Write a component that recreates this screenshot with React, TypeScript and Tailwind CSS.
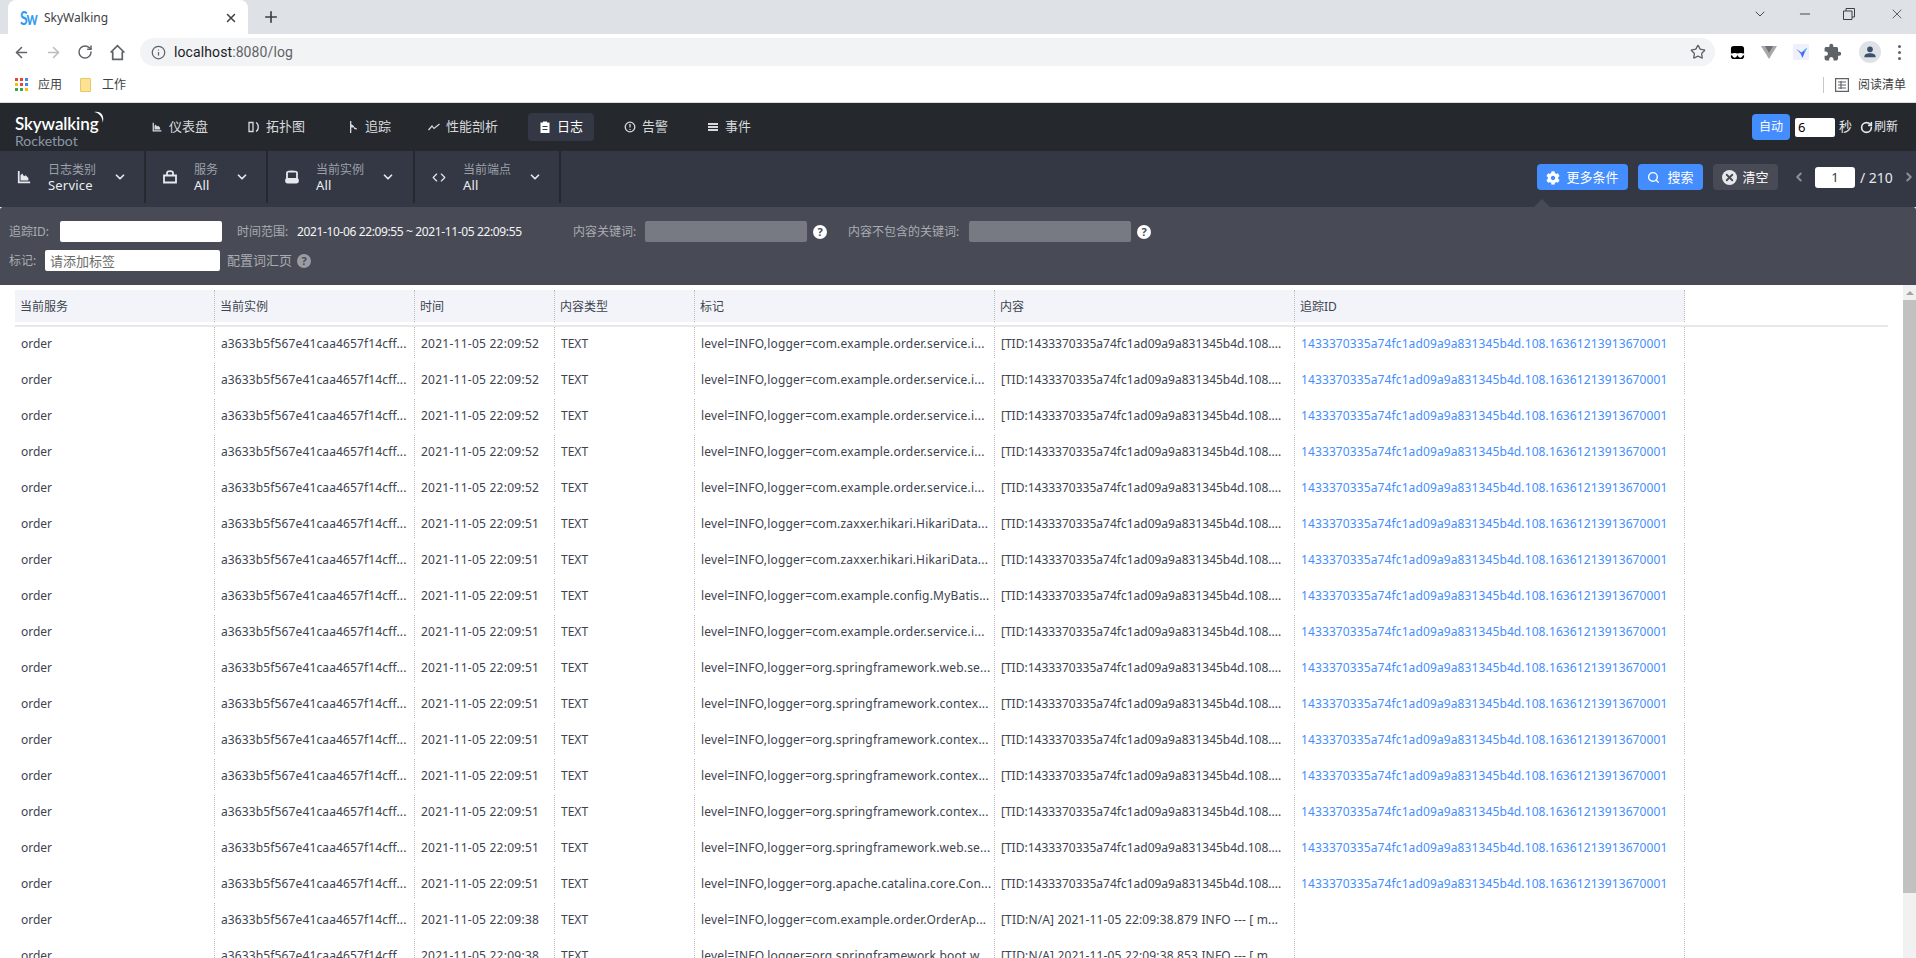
import { ArrowLeft, ArrowRight, RotateCw, Info, Star, X, Plus, ChevronDown, ChevronLeft, ChevronRight, Minus, Search, Code } from 'lucide-react';
import { FaCog } from 'react-icons/fa';
import { MdExtension } from 'react-icons/md';

const ui = 'font-["Noto_Sans","Noto_Sans_CJK_SC",sans-serif]';

const traceId = '1433370335a74fc1ad09a9a831345b4d.108.16361213913670001';
const tidText = '[TID:1433370335a74fc1ad09a9a831345b4d.108....';
const svc = 'level=INFO,logger=com.example.order.service.i...';
const hikari = 'level=INFO,logger=com.zaxxer.hikari.HikariData...';
const web = 'level=INFO,logger=org.springframework.web.se...';
const ctx = 'level=INFO,logger=org.springframework.contex...';

const rows = [
  { time: '22:09:52', tag: svc, content: tidText, trace: traceId },
  { time: '22:09:52', tag: svc, content: tidText, trace: traceId },
  { time: '22:09:52', tag: svc, content: tidText, trace: traceId },
  { time: '22:09:52', tag: svc, content: tidText, trace: traceId },
  { time: '22:09:52', tag: svc, content: tidText, trace: traceId },
  { time: '22:09:51', tag: hikari, content: tidText, trace: traceId },
  { time: '22:09:51', tag: hikari, content: tidText, trace: traceId },
  { time: '22:09:51', tag: 'level=INFO,logger=com.example.config.MyBatis...', content: tidText, trace: traceId },
  { time: '22:09:51', tag: svc, content: tidText, trace: traceId },
  { time: '22:09:51', tag: web, content: tidText, trace: traceId },
  { time: '22:09:51', tag: ctx, content: tidText, trace: traceId },
  { time: '22:09:51', tag: ctx, content: tidText, trace: traceId },
  { time: '22:09:51', tag: ctx, content: tidText, trace: traceId },
  { time: '22:09:51', tag: ctx, content: tidText, trace: traceId },
  { time: '22:09:51', tag: web, content: tidText, trace: traceId },
  { time: '22:09:51', tag: 'level=INFO,logger=org.apache.catalina.core.Con...', content: tidText, trace: traceId },
  { time: '22:09:38', tag: 'level=INFO,logger=com.example.order.OrderAp...', content: '[TID:N/A] 2021-11-05 22:09:38.879 INFO --- [ m...', trace: '' },
  { time: '22:09:38', tag: 'level=INFO,logger=org.springframework.boot.w...', content: '[TID:N/A] 2021-11-05 22:09:38.853 INFO --- [ m...', trace: '' },
];

const ChartIcon = ({ className }: { className?: string }) => (
  <svg viewBox="0 0 16 16" className={className} fill="currentColor">
    <path d="M1 1h2v12h12v2H1z" />
    <path d="M4 6l2-2 2 3 2-1 3 3v3H4z" />
  </svg>
);

const QuestionDot = ({ color }: { color: string }) => (
  <span className={`flex h-[14px] w-[14px] items-center justify-center rounded-full ${color} text-[11px] font-bold leading-none text-[#484b55]`}>?</span>
);

const Selector = ({ w, icon, label, value, gap }: { w: string; icon: React.ReactNode; label: string; value: string; gap: string }) => (
  <div className={`flex h-[52px] ${w} items-center border-r-2 border-[#25292e] pl-[17px]`}>
    <span className="flex w-[14px] justify-center text-[#e6e8ec]">{icon}</span>
    <div className={`${gap} ml-[17px] flex flex-col`}>
      <span className="text-[12px] leading-[15px] text-[#9da1a9]">{label}</span>
      <span className="text-[13px] leading-[16px] tracking-[0.2px] text-[#eceef1]">{value}</span>
    </div>
    <ChevronDown className="h-[14px] w-[14px] text-[#e5e7eb]" strokeWidth={3} />
  </div>
);

const NavItem = ({ icon, label, ml, active }: { icon: React.ReactNode; label: string; ml: string; active?: boolean }) => (
  <div className={`${ml} flex h-[28px] items-center gap-[6px] rounded-[4px] px-[11px] text-[13px] ${active ? 'bg-[#333844] text-white' : 'text-[#d7d9dd]'}`}>
    <span className="flex w-[12px] justify-center">{icon}</span>
    <span>{label}</span>
  </div>
);

const Browser = () => (
  <div className="bg-white">
    <div className="flex h-[34px] items-end bg-[#dee1e6]">
      <div className="ml-[8px] flex h-[34px] w-[240px] items-center rounded-t-[8px] bg-white pl-[12px] pr-[10px] pt-[2px]">
        <span className="flex w-[18px] scale-y-[1.3] font-['Lato',sans-serif] text-[14px] font-bold leading-none tracking-[-1px] text-[#2f9bf0]">Sw</span>
        <span className={`ml-[6px] flex-1 text-[12px] text-[#3c4043] ${ui}`}>SkyWalking</span>
        <X className="h-[14px] w-[14px] text-[#3c4043]" strokeWidth={2.5} />
      </div>
      <Plus className="mb-[8px] ml-[14px] h-[18px] w-[18px] text-[#3c4043]" strokeWidth={2.2} />
      <div className="flex-1" />
      <div className="flex h-[28px] items-center self-start text-[#3c4043]">
        <ChevronDown className="mr-[29px] h-[16px] w-[16px]" strokeWidth={1.4} />
        <Minus className="mr-[30px] h-[16px] w-[16px]" strokeWidth={1.4} />
        <svg viewBox="0 0 12 12" className="mr-[34px] h-[12px] w-[12px]" fill="none" stroke="currentColor">
          <path d="M.5 3h8.500v8.500H.5zM3 3V.5h8.500V9H9" />
        </svg>
        <X className="mr-[11px] h-[16px] w-[16px]" strokeWidth={1.2} />
      </div>
    </div>
    <div className="flex h-[34px] items-center pl-[13px] pt-[2px] text-[#5f6368]">
      <ArrowLeft className="h-[17px] w-[17px]" strokeWidth={2.2} />
      <ArrowRight className="ml-[15px] h-[17px] w-[17px] text-[#babcbe]" strokeWidth={2.2} />
      <RotateCw className="ml-[15px] h-[16px] w-[16px]" strokeWidth={2.2} />
      <svg viewBox="0 0 16 16" className="ml-[16px] h-[17px] w-[17px]" fill="none" stroke="currentColor" strokeWidth="1.6">
        <path d="M1.500 8L8 1.500 14.500 8M3.500 7v7.500h9V7" />
      </svg>
      <div className="ml-[14px] flex h-[28px] w-[1575px] items-center rounded-full bg-[#f1f3f4] pl-[11px] pr-[9px]">
        <Info className="h-[15px] w-[15px]" strokeWidth={2} />
        <span className="ml-[8px] flex-1 font-['Roboto',sans-serif] text-[14px] tracking-[0.1px] text-[#202124]">localhost<span className="text-[#5f6368]">:8080/log</span></span>
        <Star className="h-[16px] w-[16px]" strokeWidth={2} />
      </div>
      <svg viewBox="0 0 16 16" className="ml-[15px] h-[15px] w-[15px]">
        <rect x="1" y="1" width="14" height="14" rx="3" fill="#000" />
        <rect x="1" y="9" width="14" height="2" fill="#fff" />
        <circle cx="5" cy="11" r="2.500" fill="#fff" />
        <circle cx="11" cy="11" r="2.500" fill="#fff" />
      </svg>
      <svg viewBox="0 0 16 16" className="ml-[16px] h-[16px] w-[16px]">
        <path d="M0 2h16L8 15z" fill="#a6a8aa" />
        <path d="M4 2h8L8 9z" fill="#6e7072" />
      </svg>
      <div className="ml-[16px] flex h-[16px] w-[16px] items-center justify-center rounded-[2px] bg-[#eef0fb]">
        <svg viewBox="0 0 14 14" className="h-[13px] w-[13px]">
          <path d="M1 3l6 4 6-5-3 6-2 5-2-5z" fill="#4a6cf0" />
          <path d="M10 8l3-6-3 2z" fill="#45c1f0" />
        </svg>
      </div>
      <MdExtension className="ml-[14px] h-[19px] w-[19px] text-[#5f6368]" />
      <div className="ml-[17px] flex h-[22px] w-[22px] items-center justify-center rounded-full bg-[#dee1e6]">
        <svg viewBox="0 0 16 16" className="h-[14px] w-[14px]" fill="#3c4f6b">
          <circle cx="8" cy="5" r="3.200" />
          <path d="M1.500 14c0-3.500 3-4.500 6.500-4.500s6.500 1 6.500 4.500z" />
        </svg>
      </div>
      <div className="ml-[17px] flex flex-col gap-[3px]">
        <span className="h-[3px] w-[3px] rounded-full bg-[#5f6368]" />
        <span className="h-[3px] w-[3px] rounded-full bg-[#5f6368]" />
        <span className="h-[3px] w-[3px] rounded-full bg-[#5f6368]" />
      </div>
    </div>
    <div className={`flex h-[35px] items-center border-b border-[#dadce0] pb-[1px] pl-[15px] text-[12px] text-[#3c4043] ${ui}`}>
      <div className="grid h-[13px] w-[13px] grid-cols-3 gap-[2px]">
        {['bg-[#ea4335]', 'bg-[#ea4335]', 'bg-[#4285f4]', 'bg-[#fbbc05]', 'bg-[#ea4335]', 'bg-[#4285f4]', 'bg-[#34a853]', 'bg-[#34a853]', 'bg-[#fbbc05]'].map((c, i) => (
          <span key={i} className={c} />
        ))}
      </div>
      <span className="ml-[10px]">应用</span>
      <span className="ml-[18px] h-[14px] w-[11px] rounded-[1px] border border-[#e8c860] bg-[#fde293]" />
      <span className="ml-[11px]">工作</span>
      <div className="flex-1" />
      <span className="h-[16px] w-px bg-[#c4c7cc]" />
      <svg viewBox="0 0 14 14" className="ml-[11px] h-[14px] w-[14px]" fill="none" stroke="#5f6368" strokeWidth="1.200">
        <path d="M.600 .600h12.800v12.800H.600zM3 4h8M3 7h8M3 10h8M6 3v8" />
      </svg>
      <span className="ml-[9px] mr-[10px]">阅读清单</span>
    </div>
  </div>
);

const Header = () => (
  <div className="flex h-[48px] items-center bg-[#25292e] pr-[18px]">
    <div className="ml-[15px] flex w-[95px] flex-col self-start pt-[11px] font-['Lato',sans-serif]">
      <div className="flex items-start">
        <span className="whitespace-nowrap text-[17px] font-semibold leading-[20px] tracking-[-0.1px] text-white">Skywalking</span>
        <svg viewBox="0 0 12 14" className="-ml-[5px] -mt-[3px] h-[15px] w-[13px] shrink-0" fill="#fff">
          <path d="M1 1c6-1.500 10 3 8 10 0-5-3-9-8-10z" />
        </svg>
      </div>
      <span className="text-[14px] leading-[14px] text-[#8b98a9]">Rocketbot</span>
    </div>
    <NavItem ml="ml-[30px]" label="仪表盘" icon={<ChartIcon className="h-[10px] w-[10px]" />} />
    <NavItem ml="ml-[18px]" label="拓扑图" icon={
      <svg viewBox="0 0 12 12" className="h-[12px] w-[12px]" fill="none" stroke="currentColor" strokeWidth="1.300"><path d="M1 1.500h4v9H1zM8 1.500c3 1.500 3 7.500 0 9" /></svg>
    } />
    <NavItem ml="ml-[20px]" label="追踪" icon={
      <svg viewBox="0 0 12 12" className="h-[12px] w-[12px]" fill="currentColor"><path d="M3 0h1.300v12H3zM4 3l3 2v1.500H4zM7 6l3 1.500v1L7 8z" /></svg>
    } />
    <NavItem ml="ml-[15px]" label="性能剖析" icon={
      <svg viewBox="0 0 12 12" className="h-[12px] w-[12px]" fill="none" stroke="currentColor" strokeWidth="1.200"><path d="M.500 9l3.500-4 2 2.500L11.500 3" /></svg>
    } />
    <NavItem ml="ml-[19px]" label="日志" active icon={
      <svg viewBox="0 0 12 12" className="h-[12px] w-[12px]" fill="currentColor"><path d="M1.500 1.500h2.500V.500h4v1h2.500V12h-9zM3.500 5v1h5V5zM3.500 8v1h5V8z" /></svg>
    } />
    <NavItem ml="ml-[19px]" label="告警" icon={
      <svg viewBox="0 0 12 12" className="h-[12px] w-[12px]" fill="none" stroke="currentColor" strokeWidth="1.300"><circle cx="6" cy="6" r="4.800" /><path d="M6 3v3.500M6 8v1" /></svg>
    } />
    <NavItem ml="ml-[17px]" label="事件" icon={
      <svg viewBox="0 0 12 12" className="h-[12px] w-[12px]" fill="currentColor"><path d="M1 2h10v2H1zM1 5h10v2H1zM1 8h10v2H1z" /></svg>
    } />
    <div className="flex-1" />
    <button className="h-[26px] w-[38px] rounded-[4px] bg-[#448dfe] text-[12px] text-white">自动</button>
    <input readOnly value="6" className="ml-[5px] h-[19px] w-[40px] rounded-[2px] bg-white pl-[3px] text-[13px] leading-none text-black" />
    <span className="ml-[4px] text-[13px] text-[#e5e7eb]">秒</span>
    <RotateCw className="ml-[8px] h-[13px] w-[13px] text-[#e5e7eb]" strokeWidth={3} />
    <span className="ml-[1px] text-[12px] text-[#e5e7eb]">刷新</span>
  </div>
);

const Toolbar = () => (
  <div className="flex h-[56px] items-start bg-[#333844]">
    <Selector w="w-[146px]" gap="w-[65px]" label="日志类别" value="Service" icon={<ChartIcon className="h-[14px] w-[14px]" />} />
    <Selector w="w-[122px]" gap="w-[41px]" label="服务" value="All" icon={
      <svg viewBox="0 0 14 14" className="h-[14px] w-[14px]" fill="none" stroke="currentColor" strokeWidth="1.800"><path d="M1 5.500h12v7H1zM4 5.500V3c0-2.500 6-2.500 6 0v2.500" /><path d="M4 9h.01M10 9h.01" /></svg>
    } />
    <Selector w="w-[147px]" gap="w-[65px]" label="当前实例" value="All" icon={
      <svg viewBox="0 0 14 14" className="h-[14px] w-[14px]" fill="none" stroke="currentColor" strokeWidth="1.800"><path d="M2 9V2.500C2 1 12 1 12 2.500V9" /><rect x="1" y="9" width="12" height="3.500" rx="1.500" fill="currentColor" /></svg>
    } />
    <Selector w="w-[146px]" gap="w-[65px]" label="当前端点" value="All" icon={<Code className="h-[15px] w-[15px]" strokeWidth={2} />} />
    <div className="flex-1" />
    <div className="mt-[13px] flex items-center text-[13px] text-white">
      <div className="relative ml-[1px]">
        <button className="flex h-[26px] w-[91px] items-center justify-center gap-[6px] rounded-[4px] bg-[#448dfe] pt-[1px]">
          <FaCog className="h-[14px] w-[14px]" />
          更多条件
        </button>
        <span className="absolute left-[-3px] top-[35px] h-0 w-0 border-x-[8px] border-b-[8px] border-x-transparent border-b-[#484b55]" />
      </div>
      <button className="ml-[10px] flex h-[26px] w-[65px] items-center justify-center gap-[7px] rounded-[4px] bg-[#448dfe] pt-[1px]">
        <Search className="h-[13px] w-[13px]" strokeWidth={2.5} />
        搜索
      </button>
      <button className="ml-[10px] flex h-[26px] w-[65px] items-center justify-center gap-[5px] rounded-[4px] bg-[#484b55] pt-[1px]">
        <span className="flex h-[15px] w-[15px] items-center justify-center rounded-full bg-[#e6e8ec]">
          <X className="h-[11px] w-[11px] text-[#484b55]" strokeWidth={4} />
        </span>
        清空
      </button>
      <ChevronLeft className="ml-[14px] h-[14px] w-[14px] text-[#8b8e96]" strokeWidth={3.5} />
      <input readOnly value="1" className="ml-[9px] h-[21px] w-[40px] rounded-[3px] bg-white text-center text-[13px] text-[#333844]" />
      <span className="ml-[5px] w-[39px] text-[14px] text-[#e5e7eb]">/ 210</span>
      <ChevronRight className="ml-[3px] h-[14px] w-[14px] text-[#8b8e96]" strokeWidth={3.5} />
    </div>
  </div>
);

const Filters = () => (
  <div className="flex h-[78px] flex-col rounded-t-[3px] bg-[#484b55] pl-[9px] pt-[14px] text-[12px] text-[#a9acb2]">
    <div className="flex h-[21px] items-center">
      <span className="w-[51px]">追踪ID:</span>
      <input readOnly className="h-[21px] w-[162px] rounded-[2px] bg-white" />
      <span className="ml-[15px] w-[60px]">时间范围:</span>
      <span className="w-[276px] whitespace-nowrap tracking-[-0.37px] text-[#f4f5f7]">2021-10-06 22:09:55 ~ 2021-11-05 22:09:55</span>
      <span className="w-[72px]">内容关键词:</span>
      <div className="h-[21px] w-[162px] rounded-[2px] bg-[#777a82]" />
      <span className="ml-[6px]"><QuestionDot color="bg-white" /></span>
      <span className="ml-[21px] w-[121px]">内容不包含的关键词:</span>
      <div className="h-[21px] w-[162px] rounded-[2px] bg-[#777a82]" />
      <span className="ml-[6px]"><QuestionDot color="bg-white" /></span>
    </div>
    <div className="mt-[8px] flex h-[21px] items-center">
      <span className="w-[36px]">标记:</span>
      <input readOnly placeholder="请添加标签" className="h-[21px] w-[175px] rounded-[2px] bg-white pl-[5px] text-[13px] placeholder:text-[#6b6b6b]" />
      <span className="ml-[7px] text-[13px]">配置词汇页</span>
      <span className="ml-[5px]"><QuestionDot color="bg-[#9a9ca3]" /></span>
    </div>
  </div>
);

const widths = ['w-[200px]', 'w-[200px]', 'w-[140px]', 'w-[140px]', 'w-[300px]', 'w-[300px]', 'w-[390px]'];
const spacing = ['', 'tracking-[0.13px]', 'tracking-[0.25px]', '', 'tracking-[0.2px]', '', 'tracking-[0.11px]'];
const heads = ['当前服务', '当前实例', '时间', '内容类型', '标记', '内容', '追踪ID'];

const Row = ({ r }: { r: (typeof rows)[number] }) => {
  const cells = ['order', 'a3633b5f567e41caa4657f14cff...', `2021-11-05 ${r.time}`, 'TEXT', r.tag, r.content, r.trace];
  return (
    <div className="mb-[5px] flex h-[31px] shrink-0">
      {cells.map((c, i) => (
        <div key={i} className={`${widths[i]} ${spacing[i]} ${i === 5 && !r.trace ? 'tracking-[0.15px]' : ''} flex items-center whitespace-nowrap border-r border-dotted border-[#bbb] pl-[6px] pt-[3px] ${i === 6 ? 'text-[#448dfe]' : 'text-[#3d444f]'}`}>
          {c}
        </div>
      ))}
    </div>
  );
};

const LogTable = () => (
  <div className={`flex-1 overflow-hidden pl-[15px] pr-[15px] pt-[5px] text-[12px] ${ui}`}>
    <div className="flex h-[32px] w-[1670px] bg-[#f3f4f9]">
      {heads.map((h, i) => (
        <div key={h} className={`${widths[i]} flex items-center border-r border-dotted border-[#bbb] pl-[5px] pt-[2px] text-[#3d444f]`}>{h}</div>
      ))}
    </div>
    <div className="mt-[3px] h-[2px] bg-[#e8e8e8]" />
    <div className="flex flex-col">
      {rows.map((r, i) => (
        <Row key={i} r={r} />
      ))}
    </div>
  </div>
);

const Scrollbar = () => (
  <div className="flex w-[13px] flex-col bg-[#f1f1f1]">
    <div className="flex h-[15px] items-center justify-center">
      <span className="h-0 w-0 border-x-[4px] border-b-[4px] border-x-transparent border-b-[#a3a3a3]" />
    </div>
    <div className="h-[593px] bg-[#c1c1c1]" />
  </div>
);

export default function App() {
  return (
    <div className={`flex h-[958px] flex-col overflow-hidden bg-white ${ui}`}>
      <Browser />
      <Header />
      <Toolbar />
      <Filters />
      <div className="flex min-h-0 flex-1">
        <LogTable />
        <Scrollbar />
      </div>
    </div>
  );
}
